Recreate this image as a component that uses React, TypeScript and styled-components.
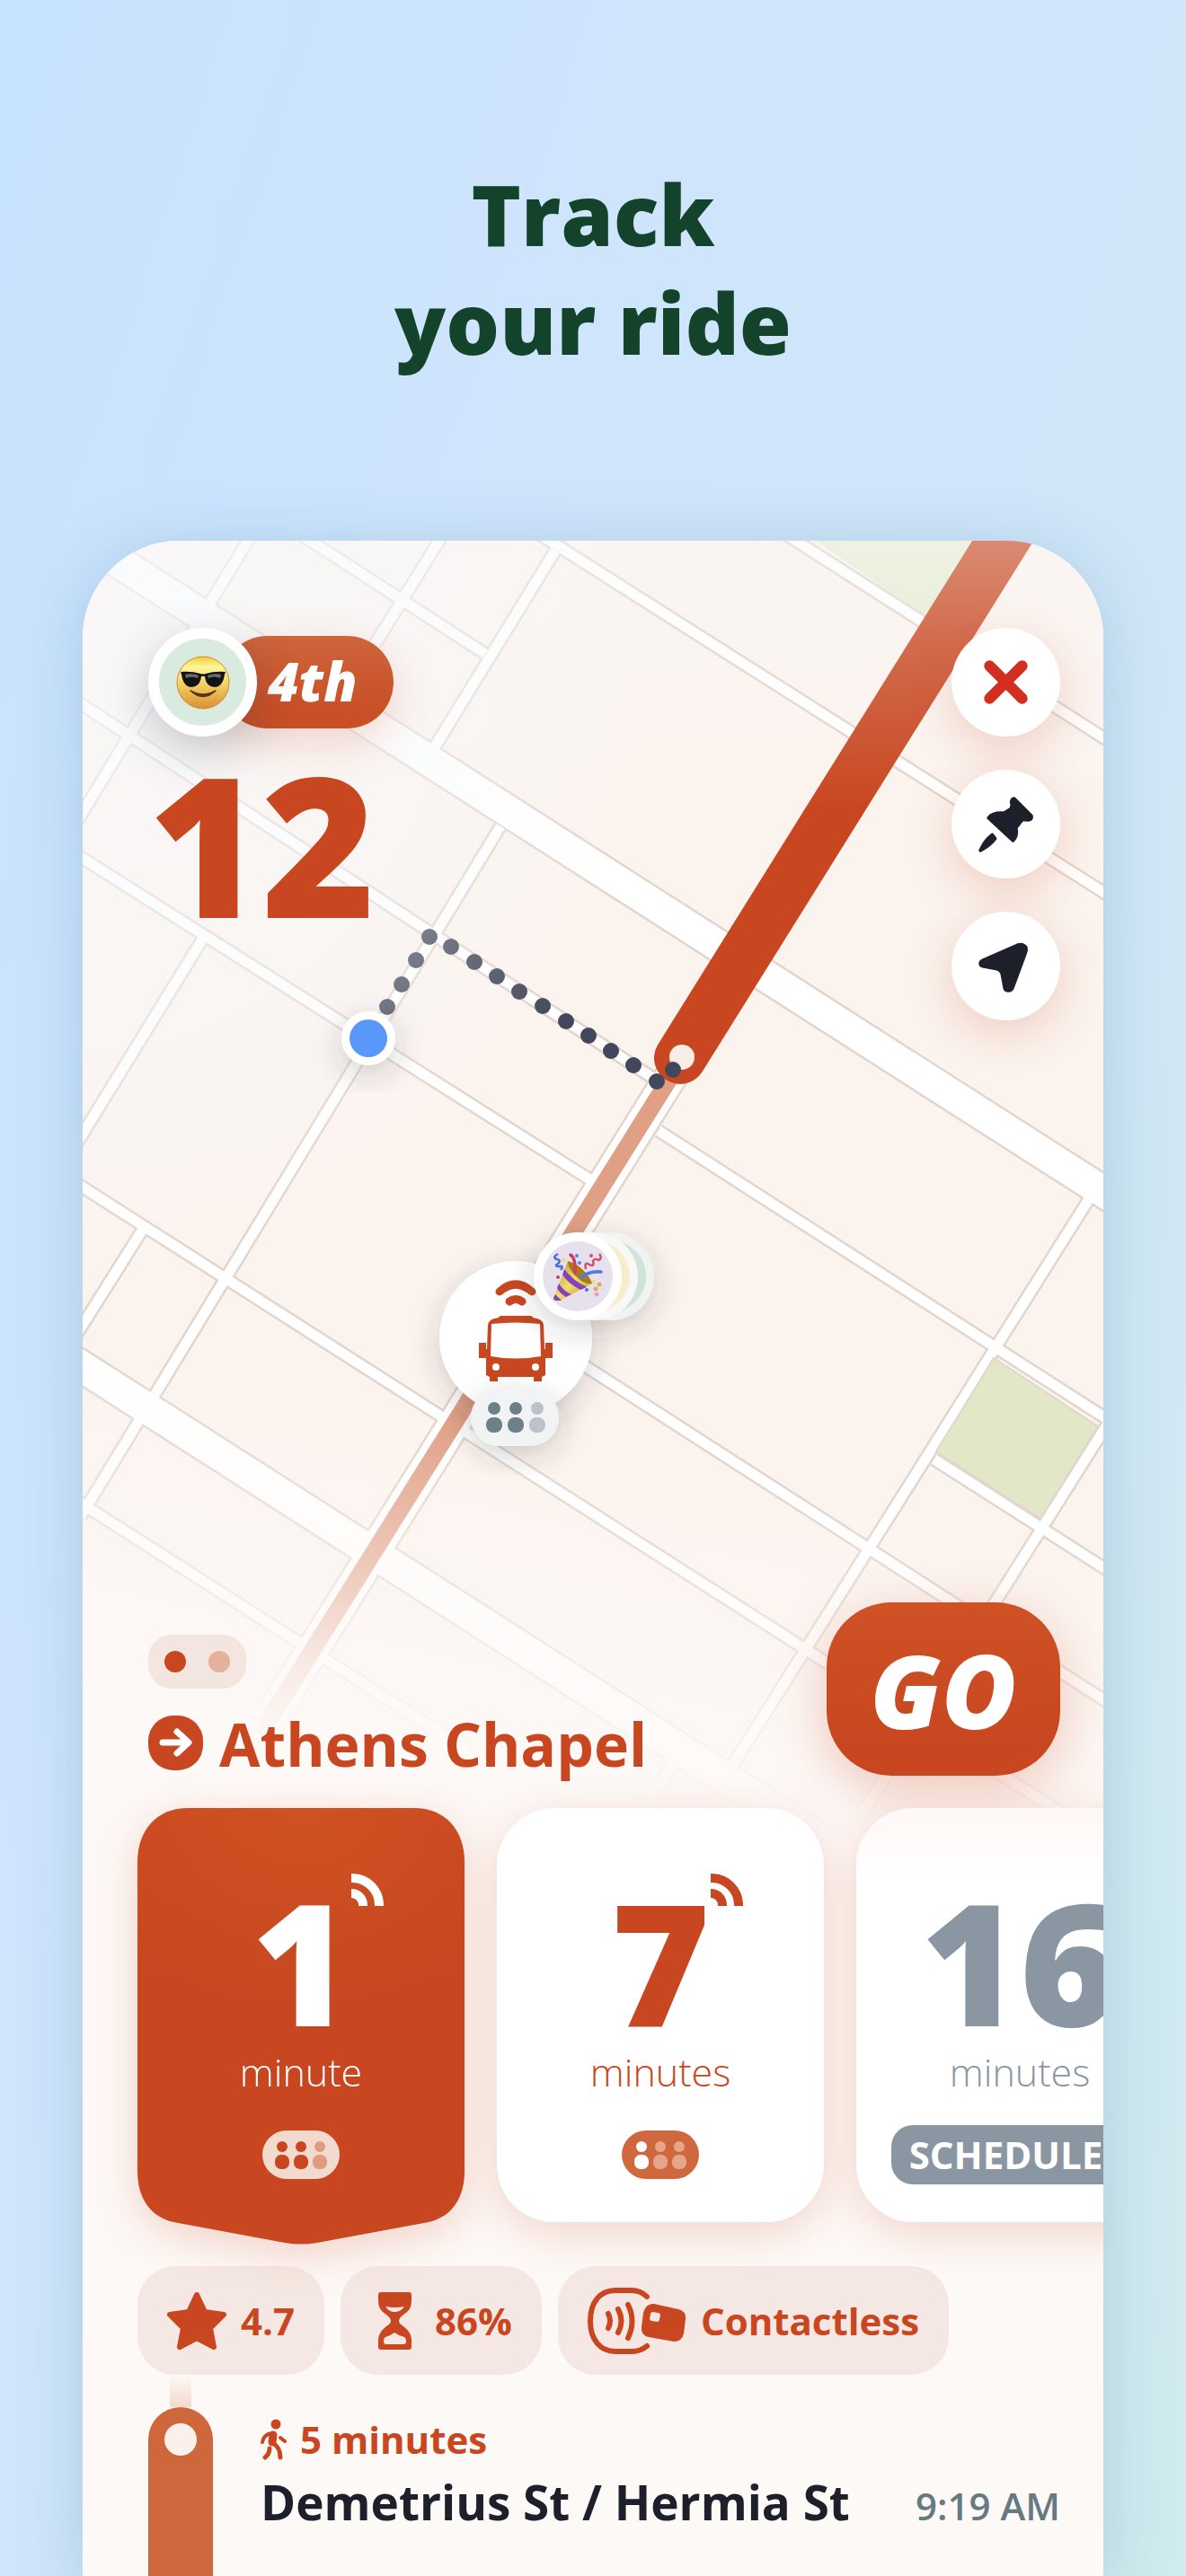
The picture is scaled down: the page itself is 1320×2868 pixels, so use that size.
import React from "react";
import styled, { createGlobalStyle, css } from "styled-components";

const orange = "#c84720";
const ink = "#1d1f2b";
const slate = "#8a96a2";
const uiFont = '"Open Sans", "Noto Sans", sans-serif';

const GlobalStyle = createGlobalStyle`
  *, *::before, *::after { box-sizing: border-box; }
  body { margin: 0; font-family: ${uiFont}; }
  h1, h2, p, ul { margin: 0; padding: 0; }
  ul { list-style: none; }
  button { border: 0; padding: 0; font: inherit; cursor: pointer; }
  svg { display: block; }
`;

const Page = styled.main`
  min-height: 100vh;
  display: flex;
  flex-direction: column;
  overflow: hidden;
  padding: 178px 92px 0;
  background: linear-gradient(108deg, #c7e2ff 0%, #cfe5fc 34%, #d0e6f9 62%, #d0ebee 100%);
`;

const Title = styled.h1`
  text-align: center;
  color: #14432b;
  font-size: 94px;
  font-weight: 800;
  line-height: 121px;
`;

const Sheet = styled.section`
  position: relative;
  flex: 1;
  display: flex;
  flex-direction: column;
  margin-top: 182px;
  border-radius: 108px 108px 0 0;
  background: #fdf9f7;
  box-shadow: 0 10px 70px rgba(90, 140, 170, 0.3);
`;

const Clip = styled.div`
  flex: 1;
  display: flex;
  flex-direction: column;
  overflow: hidden;
  border-radius: inherit;
`;

const MapLayer = styled.div`
  position: absolute;
  inset: 0 0 auto;
  height: 1480px;
  overflow: hidden;
  border-radius: inherit;
  svg { width: 100%; height: 100%; }
`;

const Hero = styled.header`
  position: relative;
  min-height: 1375px;
  display: flex;
  flex-direction: column;
  justify-content: space-between;
  padding: 97px 48px 0 73px;
`;

const HeroRow = styled.div<{ $end?: boolean }>`
  display: flex;
  justify-content: space-between;
  align-items: ${(p) => (p.$end ? "flex-end" : "flex-start")};
`;

const Rank = styled.div`
  display: flex;
  align-items: center;
`;

const Avatar = styled.span`
  position: relative;
  display: grid;
  place-items: center;
  width: 121px;
  height: 121px;
  border: 12px solid #fff;
  border-radius: 50%;
  background: #d9ebdf;
  box-shadow: 0 16px 50px rgba(40, 50, 70, 0.25);
`;

const RankLabel = styled.span`
  height: 103px;
  margin-left: -40px;
  padding: 0 40px 0 52px;
  border-radius: 52px;
  background: linear-gradient(#ce653c, #c94f26 80%);
  box-shadow: 0 16px 50px rgba(200, 72, 32, 0.2);
  color: #fff;
  font-size: 60px;
  font-weight: 800;
  font-style: italic;
  line-height: 100px;
`;

const RouteNumber = styled.p`
  color: ${orange};
  font-size: 216px;
  font-weight: 800;
  line-height: 236px;
`;

const Controls = styled.div`
  display: flex;
  flex-direction: column;
  gap: 37px;
`;

const RoundButton = styled.button`
  width: 121px;
  height: 121px;
  border-radius: 50%;
  background: #fff;
  color: ${ink};
  box-shadow: 0 14px 50px rgba(200, 72, 32, 0.22);
  svg { width: 100%; height: 100%; }
`;

const Heading = styled.div`
  display: flex;
  flex-direction: column;
  align-items: flex-start;
  gap: 30px;
  padding-bottom: 6px;
`;

const Pager = styled.div`
  display: flex;
  justify-content: space-between;
  align-items: center;
  width: 109px;
  height: 60px;
  padding: 0 18px;
  border-radius: 26px;
  background: #f3e5e0;
`;

const PagerDot = styled.span<{ $active?: boolean }>`
  width: 24px;
  height: 24px;
  border-radius: 50%;
  background: ${(p) => (p.$active ? orange : "#e5b09c")};
`;

const Direction = styled.h2`
  display: flex;
  align-items: center;
  gap: 18px;
  height: 61px;
  color: ${orange};
  font-size: 66px;
  font-weight: 700;
  line-height: 60px;
  white-space: nowrap;
`;

const GoButton = styled.button`
  width: 260px;
  height: 193px;
  border-radius: 72px;
  background: linear-gradient(#cf5124, ${orange} 80%);
  box-shadow: 0 16px 60px rgba(200, 72, 32, 0.28);
  color: #fff;
  font-size: 114px;
  font-weight: 800;
  font-style: italic;
  line-height: 190px;
`;

const Departures = styled.ul`
  position: relative;
  display: flex;
  gap: 36px;
  margin-top: 36px;
  padding-left: 61px;
`;

type Tone = "active" | "live" | "scheduled";

const toneStyles = {
  active: css`
    color: #fff;
    filter: drop-shadow(0 12px 25px rgba(200, 72, 32, 0.22));
  `,
  live: css`
    color: ${orange};
    background: #fff;
    box-shadow: 0 12px 50px rgba(200, 72, 32, 0.2);
  `,
  scheduled: css`
    color: ${slate};
    background: linear-gradient(#fef8f6, #fff 80px);
    box-shadow: 0 12px 50px rgba(200, 72, 32, 0.2);
  `,
};

const Departure = styled.li<{ $tone: Tone }>`
  position: relative;
  flex: 0 0 364px;
  display: flex;
  flex-direction: column;
  align-items: center;
  padding: 76px 0 41px;
  border-radius: 64px;
  ${(p) => toneStyles[p.$tone]}
`;

const ActiveShape = styled.svg`
  position: absolute;
  top: 0;
  left: 0;
  width: 100%;
  height: 486px;
`;

const Count = styled.div`
  position: relative;
  font-size: 188px;
  font-weight: 800;
  line-height: 188px;
`;

const Signal = styled.svg`
  position: absolute;
  top: -4px;
  left: 100%;
  width: 38px;
  height: 38px;
`;

const Unit = styled.div`
  position: relative;
  font-size: 43px;
  font-weight: 300;
  line-height: 60px;
`;

const Foot = styled.div`
  position: relative;
  display: flex;
  align-items: center;
  height: 68px;
  margin-top: 28px;
`;

const ScheduledTag = styled.span`
  padding: 0 20px;
  border-radius: 24px;
  background: ${slate};
  color: #fff;
  font-size: 42px;
  font-weight: 700;
  line-height: 66px;
`;

const Facts = styled.ul`
  position: relative;
  display: flex;
  gap: 18px;
  margin-top: 49px;
  padding-left: 61px;
`;

const Fact = styled.li`
  display: flex;
  align-items: center;
  gap: 16px;
  height: 121px;
  padding: 0 33px;
  border-radius: 42px;
  background: rgba(220, 180, 168, 0.24);
  color: ${orange};
  font-size: 42px;
  font-weight: 700;
  white-space: nowrap;
`;

const Stop = styled.article`
  position: relative;
  flex: 1;
  display: flex;
  gap: 53px;
  min-height: 188px;
  padding: 36px 48px 0 73px;
`;

const Rail = styled.div`
  position: relative;
  flex: 0 0 72px;
  padding-top: 18px;
  border-radius: 36px 36px 0 0;
  background: #cf673d;
  &::before {
    content: "";
    position: absolute;
    bottom: 100%;
    left: 24px;
    width: 24px;
    height: 36px;
    background: linear-gradient(rgba(207, 103, 61, 0), rgba(207, 103, 61, 0.22));
  }
  &::after {
    content: "";
    display: block;
    width: 36px;
    height: 36px;
    margin: 0 auto;
    border-radius: 50%;
    background: #fbf0ec;
  }
`;

const StopText = styled.div`
  flex: 1;
  padding-top: 6px;
`;

const Walk = styled.p`
  display: flex;
  align-items: center;
  gap: 14px;
  color: ${orange};
  font-size: 42px;
  font-weight: 700;
  line-height: 60px;
`;

const StopLine = styled.div`
  display: flex;
  justify-content: space-between;
  align-items: baseline;
`;

const StopName = styled.h2`
  color: ${ink};
  font-size: 53px;
  font-weight: 700;
  line-height: 80px;
  white-space: nowrap;
`;

const Time = styled.time`
  color: #667a82;
  font-size: 42px;
  font-weight: 600;
  white-space: nowrap;
`;

/* Street grid: [x1, y1, x2, y2] */
const wideRoads = [
  [70, 586, 1250, 1341],
  [70, 1508, 1250, 2263],
];
const roads = [
  [330, 592, 540, 728],
  [596, 592, 1240, 1001],
  [870, 592, 1240, 829],
  [1160, 592, 1240, 643],
  [80, 777, 731, 1203],
  [80, 948, 664, 1318],
  [733, 1259, 1240, 1585],
  [600, 1488, 1240, 1900],
  [80, 1314, 1240, 2056],
  [80, 1667, 1240, 2409],
  [80, 1877, 700, 2274],
  [1040, 1625, 1240, 1753],
  [282, 592, 80, 924],
  [495, 592, 400, 745],
  [618, 613, 480, 838],
  [557, 920, 90, 1688],
  [227, 1043, 80, 1282],
  [160, 1367, 80, 1494],
  [1212, 1335, 800, 1990],
  [1236, 1580, 960, 2018],
  [750, 1962, 690, 2058],
];
const vehicleTrail = [[757, 1182, 225, 2034]];
const walkDots = [
  [431, 1121], [447, 1096], [463, 1069], [478, 1043], [502, 1054], [528, 1071],
  [553, 1087], [578, 1104], [604, 1120], [630, 1137], [655, 1153], [680, 1170],
  [705, 1186], [731, 1204], [749, 1191],
];

function Lines({ items, width, color }: { items: number[][]; width: number; color: string }) {
  return (
    <g stroke={color} strokeWidth={width}>
      {items.map(([a, b, c, d]) => (
        <line key={`${a}-${b}`} x1={a} y1={b} x2={c} y2={d} />
      ))}
    </g>
  );
}

function People({ filled, on, off }: { filled: number; on: string; off: string }) {
  return (
    <g>
      {[0, 1, 2].map((i) => (
        <g key={i} fill={i < filled ? on : off}>
          <circle cx={22 + i * 21} cy={18} r={6} />
          <rect x={14 + i * 21} y={27} width={16} height={16} rx={7} />
        </g>
      ))}
    </g>
  );
}

function Capacity({ filled, on, off, bg }: { filled: number; on: string; off: string; bg: string }) {
  return (
    <svg width="86" height="54" viewBox="0 0 86 54" role="img" aria-label="Crowding">
      <rect width="86" height="54" rx="27" fill={bg} />
      <People filled={filled} on={on} off={off} />
    </svg>
  );
}

function PartyPopper() {
  return (
    <g transform="translate(643 1421)">
      <path d="M-11 -17 L-27 25 Q-26 29 -20 27 L16 8 Z" fill="url(#gold)" />
      <path d="M-15 -8 Q-5 5 10 12 L3 15 Q-11 8 -17 -2Z M-21 8 Q-15 17 -7 20 L-13 23 Q-20 19 -23 13Z M-25 20 L-18 27 L-23 27Q-27 27 -27 24Z" fill="#8043bd" />
      <path d="M-11 -17 Q-2 -15 6 -7 Q14 1 16 8 Q6 9 -3 -1 Q-11 -9 -11 -17Z" fill="#a97a1c" />
      <path d="M-3 -4 Q-2 -20 -8 -24" stroke="#cf3f62" strokeWidth="3.5" fill="none" strokeLinecap="round" />
      <path d="M4 1 Q12 -6 26 -5" stroke="#5279df" strokeWidth="3.5" fill="none" strokeLinecap="round" />
      <path d="M9 -8 Q7 -17 13 -13 Q19 -10 17 -17 Q19 -21 23 -18 Q28 -20 24 -25" stroke="#cf5073" strokeWidth="2.5" fill="none" />
      <path d="M-22 -25 Q-29 -21 -23 -19 Q-18 -18 -22 -14 Q-27 -11 -20 -11 Q-15 -12 -19 -7" stroke="#4a6bd8" strokeWidth="2.5" fill="none" />
      <g>
        <circle cx="-1" cy="-23" r="2" fill="#4d85e8" />
        <circle cx="15" cy="-23" r="2" fill="#cf5073" />
        <circle cx="2" cy="-15" r="2" fill="#4d85e8" />
        <circle cx="-16" cy="-18" r="2" fill="#ecd95b" />
        <circle cx="-22" cy="1" r="2" fill="#c64268" />
        <circle cx="18" cy="6" r="2" fill="#efdc66" />
        <circle cx="24" cy="9" r="2.5" fill="#e3a94f" />
        <circle cx="20" cy="14" r="2.5" fill="#e3a94f" />
        <circle cx="10" cy="15" r="2" fill="#4d6fe0" />
        <circle cx="21" cy="20" r="2.5" fill="#e6a3c5" />
      </g>
    </g>
  );
}

function BusMarker() {
  return (
    <g>
      <circle cx="574" cy="1489" r="85" fill="#fff" filter="url(#soft)" />
      <g fill="none" stroke={orange} strokeWidth="9" strokeLinejoin="round">
        <path d="M556 1438 Q574 1422 592 1438" strokeLinecap="round" />
        <path d="M567 1449 Q574 1444 581 1449" strokeLinecap="round" />
      </g>
      <path
        fill={orange}
        fillRule="evenodd"
        d="M555 1467 Q555 1465 558 1465 H590 Q593 1465 593 1467 Q604 1468 605 1475 L606 1502 H607 V1495 H615 V1512 H607 V1531 L603 1533 V1538 H594 V1533 H554 V1538 H545 V1533 L541 1531 V1512 H533 V1495 H541 V1502 H542 L543 1475 Q544 1468 555 1467Z M547 1474 L546 1510 Q574 1515 602 1510 L601 1474 Q574 1471 547 1474Z"
      />
      <circle cx="552" cy="1522" r="4" fill="#fff" />
      <circle cx="596" cy="1522" r="4" fill="#fff" />
      <g filter="url(#soft)">
        <circle cx="679" cy="1421" r="49" fill="#f1f2f2" />
        <circle cx="679" cy="1421" r="40" fill="#cfe4d8" />
        <circle cx="661" cy="1421" r="49" fill="#f8f8f8" />
        <circle cx="661" cy="1421" r="40" fill="#f6eeca" />
        <circle cx="643" cy="1421" r="49" fill="#fff" />
        <circle cx="643" cy="1421" r="39" fill="#e7e1ee" />
      </g>
      <PartyPopper />
      <rect x="524" y="1546" width="98" height="64" rx="32" fill="#f1f3f5" filter="url(#soft)" />
      {[0, 1, 2].map((i) => (
        <g key={i} fill={i < 2 ? "#6d8087" : "#bcc2ca"}>
          <circle cx={550 + i * 24} cy={1568} r={7} />
          <rect x={541 + i * 24} y={1578} width={18} height={17} rx={8} />
        </g>
      ))}
    </g>
  );
}

function RideMap() {
  return (
    <svg viewBox="92 602 1136 1480" preserveAspectRatio="xMidYMin slice" role="img" aria-label="Map of the ride">
      <defs>
        <linearGradient id="gold" x1="0" y1="0" x2="1" y2="1">
          <stop offset="0" stopColor="#b98a24" />
          <stop offset="0.5" stopColor="#f2dc6a" />
          <stop offset="1" stopColor="#b8862c" />
        </linearGradient>
        <linearGradient id="topFade" x1="0" y1="602" x2="0" y2="900" gradientUnits="userSpaceOnUse">
          <stop offset="0" stopColor="#f8f9fa" stopOpacity="0.38" />
          <stop offset="0.4" stopColor="#f8f9fa" stopOpacity="0.2" />
          <stop offset="1" stopColor="#f8f9fa" stopOpacity="0" />
        </linearGradient>
        <radialGradient id="cornerFade" cx="92" cy="780" r="640" gradientUnits="userSpaceOnUse">
          <stop offset="0" stopColor="#f8fafc" stopOpacity="0.6" />
          <stop offset="0.6" stopColor="#f8f9fb" stopOpacity="0.42" />
          <stop offset="1" stopColor="#f8f9fa" stopOpacity="0" />
        </radialGradient>
        <linearGradient id="bottomFade" x1="0" y1="1472" x2="-78" y2="1864" gradientUnits="userSpaceOnUse">
          <stop offset="0" stopColor="#fdf9f7" stopOpacity="0" />
          <stop offset="0.48" stopColor="#fdf9f7" stopOpacity="0.48" />
          <stop offset="0.76" stopColor="#fdf9f7" stopOpacity="0.82" />
          <stop offset="1" stopColor="#fdf9f7" stopOpacity="1" />
        </linearGradient>
        <filter id="soft" x="-50%" y="-50%" width="200%" height="200%">
          <feDropShadow dx="0" dy="10" stdDeviation="16" floodColor="#3a3030" floodOpacity="0.22" />
        </filter>
      </defs>
      <rect x="92" y="602" width="1136" height="1480" fill="#fbf3ee" />
      <path d="M890 590 H1090 L1030 686Z" fill="#e6edd3" />
      <Lines items={roads} width={16} color="#e2d5cc" />
      <Lines items={wideRoads} width={39} color="#e2d5cc" />
      <Lines items={vehicleTrail} width={39} color="#e2d5cc" />
      <Lines items={roads} width={11} color="#fff" />
      <Lines items={wideRoads} width={34} color="#fff" />
      <Lines items={vehicleTrail} width={34} color="#fff" />
      <path d="M1106 1512 L1222 1588 L1158 1691 L1042 1616Z" fill="#e2e8c7" stroke="#e2d5cc" strokeWidth="2" />
      <Lines items={vehicleTrail} width={19} color="#e0a086" />
      <rect x="92" y="1480" width="1136" height="602" fill="url(#bottomFade)" />
      <line x1="757" y1="1178" x2="1135" y2="572" stroke={orange} strokeWidth="58" strokeLinecap="round" />
      <circle cx="759" cy="1177" r="14" fill="#f9ede8" />
      {walkDots.map(([x, y]) => (
        <circle key={x} cx={x} cy={y} r="9" fill="#42475b" />
      ))}
      <rect x="92" y="602" width="1136" height="300" fill="url(#topFade)" />
      <rect x="92" y="602" width="800" height="900" fill="url(#cornerFade)" />
      <g filter="url(#soft)">
        <circle cx="410" cy="1156" r="30" fill="#fff" />
      </g>
      <circle cx="410" cy="1156" r="21" fill="#5998fa" />
      <BusMarker />
    </svg>
  );
}

function CoolFace() {
  return (
    <svg width="60" height="60" viewBox="0 0 60 60" role="img" aria-label="Your avatar">
      <defs>
        <linearGradient id="face" x1="0" y1="0" x2="0" y2="1">
          <stop offset="0" stopColor="#f6c93b" />
          <stop offset="0.2" stopColor="#fdf69a" />
          <stop offset="0.5" stopColor="#f5d565" />
          <stop offset="1" stopColor="#d98f35" />
        </linearGradient>
      </defs>
      <circle cx="30" cy="30" r="29" fill="url(#face)" stroke="#cf8a2b" strokeWidth="1" />
      <path d="M5 18 Q17 17 27 20 Q30 21 33 20 Q43 17 55 18 L54 21 Q52 34 44 35 Q33 35 32 23 H28 Q27 35 16 35 Q8 34 6 21Z" fill="#141414" />
      <path d="M10 21 Q18 19 25 22 L24 25 Q17 22 11 25Z M35 22 Q42 19 50 21 L49 25 Q42 22 36 25Z" fill="#6b6b6b" />
      <path d="M16 39 Q30 52 44 39 Q30 47 16 39Z" fill="#5b3410" stroke="#5b3410" strokeWidth="1.5" strokeLinejoin="round" />
    </svg>
  );
}

function SignalIcon() {
  return (
    <Signal viewBox="0 0 38 38" aria-hidden="true" fill="none" stroke="currentColor" strokeWidth="10">
      <path d="M1 6 H3 A30 30 0 0 1 32 35 V37" strokeLinejoin="round" />
      <path d="M1 23 H2 A13 13 0 0 1 14 35 V37" strokeLinejoin="round" />
    </Signal>
  );
}

function ActiveCard() {
  return (
    <ActiveShape viewBox="0 0 364 486" preserveAspectRatio="none" aria-hidden="true">
      <defs>
        <radialGradient id="cardGlow" cx="0.5" cy="0" r="0.5" gradientTransform="translate(-0.3 0) scale(1.6 0.9)">
          <stop offset="0" stopColor="#cf5222" />
          <stop offset="1" stopColor={orange} />
        </radialGradient>
      </defs>
      <path
        fill="url(#cardGlow)"
        d="M56 0 H308 C342 0 364 24 364 60 V404 C364 434 350 455 324 461 L200 484 Q182 487 164 484 L40 461 C14 455 0 434 0 404 V60 C0 24 22 0 56 0Z"
      />
    </ActiveShape>
  );
}

export default function App() {
  return (
    <>
      <GlobalStyle />
      <Page>
        <Title>
          Track
          <br />
          your ride
        </Title>
        <Sheet>
          <MapLayer>
            <RideMap />
          </MapLayer>
          <Clip>
            <Hero>
              <HeroRow>
                <div>
                  <Rank>
                    <Avatar>
                      <CoolFace />
                    </Avatar>
                    <RankLabel>4th</RankLabel>
                  </Rank>
                  <RouteNumber>12</RouteNumber>
                </div>
                <Controls>
                  <RoundButton aria-label="Close">
                    <svg viewBox="-60 -60 120 120" stroke="#d22f20" strokeWidth="12" strokeLinecap="round">
                      <path d="M-18 -18 L18 18 M18 -18 L-18 18" />
                    </svg>
                  </RoundButton>
                  <RoundButton aria-label="Pin">
                    <svg viewBox="-60 -60 120 120" fill="currentColor" stroke="currentColor" strokeWidth="4" strokeLinejoin="round">
                      <path d="M9 -28 Q5 -27 7 -21 L6 -17 L-2 -12 Q-14 -13 -19 -7 L8 18 Q13 13 11 4 L18 -5 L23 -5 Q29 -4 28 -9Z" />
                      <path d="M-15 12 L-12 16 Q-17 23 -28 29 Q-23 18 -15 12Z" />
                    </svg>
                  </RoundButton>
                  <RoundButton aria-label="Center on my location">
                    <svg viewBox="-60 -60 120 120" fill="currentColor">
                      <path d="M-26 -8 L13 -25 Q20 -27 24 -21 Q25 -17 23 -13 L9 25 Q7 29 3 29 Q-2 29 -3 25 L-6 9 Q-7 6 -10 5 L-26 2 Q-30 1 -30 -3 Q-30 -6 -26 -8Z" />
                    </svg>
                  </RoundButton>
                </Controls>
              </HeroRow>
              <HeroRow $end>
                <Heading>
                  <Pager aria-label="Direction 1 of 2">
                    <PagerDot $active />
                    <PagerDot />
                  </Pager>
                  <Direction>
                    <svg width="61" height="61" viewBox="0 0 61 61" aria-hidden="true">
                      <rect width="61" height="61" rx="28" fill={orange} />
                      <path d="M16 30 H44 M32 18 L45 30 L32 42" fill="none" stroke="#fff" strokeWidth="7" strokeLinecap="round" strokeLinejoin="round" />
                    </svg>
                    Athens Chapel
                  </Direction>
                </Heading>
                <GoButton>GO</GoButton>
              </HeroRow>
            </Hero>

            <Departures>
              <Departure $tone="active">
                <ActiveCard />
                <Count>
                  1<SignalIcon />
                </Count>
                <Unit>minute</Unit>
                <Foot>
                  <Capacity filled={2} on={orange} off="#e19c80" bg="#f3dace" />
                </Foot>
              </Departure>
              <Departure $tone="live">
                <Count>
                  7<SignalIcon />
                </Count>
                <Unit>minutes</Unit>
                <Foot>
                  <Capacity filled={1} on="#fff" off="#e4a58b" bg="#cf683e" />
                </Foot>
              </Departure>
              <Departure $tone="scheduled">
                <Count>16</Count>
                <Unit>minutes</Unit>
                <Foot>
                  <ScheduledTag>SCHEDULED</ScheduledTag>
                </Foot>
              </Departure>
            </Departures>

            <Facts>
              <Fact>
                <svg width="66" height="66" viewBox="0 0 66 66" fill="currentColor" stroke="currentColor" strokeWidth="6" strokeLinejoin="round" aria-hidden="true">
                  <path d="M33 4 L42 23 L63 26 L48 41 L52 62 L33 52 L14 62 L18 41 L3 26 L24 23Z" />
                </svg>
                4.7
              </Fact>
              <Fact>
                <svg width="56" height="64" viewBox="-9 0 56 64" aria-hidden="true">
                  <path
                    fill="currentColor"
                    fillRule="evenodd"
                    d="M3 0 H34 Q37 0 37 3 V10 Q37 20 28 25 Q23 29 23 32 Q23 35 28 38 Q37 45 37 53 V61 Q37 64 34 64 H3 Q0 64 0 61 V53 Q0 45 9 38 Q14 35 14 32 Q14 29 9 25 Q0 20 0 10 V3 Q0 0 3 0Z M8 16 Q12 22 18 22 Q25 22 29 16 Q18 18 8 16Z M18 45 Q14 48 8 50 Q6 51 6 55 Q6 58 9 58 H28 Q31 58 31 55 Q31 51 29 50 Q22 48 18 45Z"
                  />
                </svg>
                86%
              </Fact>
              <Fact>
                <svg width="110" height="74" viewBox="0 0 110 74" fill="none" stroke="currentColor" strokeLinecap="round" aria-hidden="true">
                  <path d="M66 10 Q59 3 49 3 H31 C14 3 3 16 3 37 C3 58 14 71 31 71 H49 Q59 71 66 65" strokeWidth="6" />
                  <path d="M23 29 Q27 37 23 45 M34 24 Q41 37 34 50 M45 19 Q54 37 45 56" strokeWidth="6" />
                  <path
                    fill="currentColor"
                    fillRule="evenodd"
                    stroke="none"
                    d="M74 18 L101 24 Q110 26 109 35 L107 51 Q105 60 96 60 L68 55 Q59 53 60 44 L62 28 Q65 17 74 18Z M73 27 Q70 27 70 30 L69 34 Q69 37 72 37 L77 38 Q80 38 80 35 L81 31 Q81 28 78 28Z"
                  />
                </svg>
                Contactless
              </Fact>
            </Facts>

            <Stop>
              <Rail />
              <StopText>
                <Walk>
                  <svg width="30" height="46" viewBox="0 0 30 46" fill="none" stroke="currentColor" strokeLinecap="round" strokeLinejoin="round" aria-hidden="true">
                    <circle cx="17" cy="6" r="5.5" fill="currentColor" stroke="none" />
                    <path d="M14 18 L13 26" strokeWidth="9" />
                    <path d="M12 16 Q3 18 2 26 M22 21 L27 25" strokeWidth="4" />
                    <path d="M14 27 Q22 32 22 43 M10 33 Q10 39 5 43" strokeWidth="5" />
                  </svg>
                  5 minutes
                </Walk>
                <StopLine>
                  <StopName>Demetrius St / Hermia St</StopName>
                  <Time dateTime="09:19">9:19 AM</Time>
                </StopLine>
              </StopText>
            </Stop>
          </Clip>
        </Sheet>
      </Page>
    </>
  );
}
